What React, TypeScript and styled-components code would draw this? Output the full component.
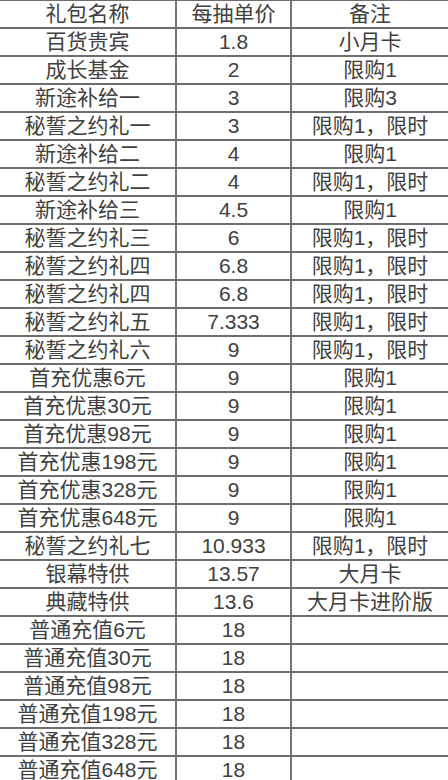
import React from 'react';
import styled, { createGlobalStyle } from 'styled-components';

const GlobalStyle = createGlobalStyle`
    html, body {
        margin: 0;
        padding: 0;
        background: #ffffff;
    }
    body {
        font-family: "Liberation Sans", "Noto Sans CJK SC", sans-serif;
    }
`;

const Sheet = styled.div`
    width: 448px;
    margin-top: -1px;
    border-top: 2px solid #6e6e6e;
    color: #404040;
    font-size: 21px;
`;

const Row = styled.div`
    display: grid;
    grid-template-columns: 175px 115px 158px;
    height: 26px;
    border-bottom: 2px solid #6e6e6e;
`;

const Cell = styled.div<{ $first?: boolean }>`
    display: flex;
    align-items: center;
    justify-content: center;
    white-space: nowrap;
    overflow: hidden;
    line-height: 26px;
    border-left: ${({ $first }) => ($first ? 'none' : '2px solid #747474')};
`;

type Entry = [string, string, string];

const rows: Entry[] = [
    ['礼包名称', '每抽单价', '备注'],
    ['百货贵宾', '1.8', '小月卡'],
    ['成长基金', '2', '限购1'],
    ['新途补给一', '3', '限购3'],
    ['秘誓之约礼一', '3', '限购1，限时'],
    ['新途补给二', '4', '限购1'],
    ['秘誓之约礼二', '4', '限购1，限时'],
    ['新途补给三', '4.5', '限购1'],
    ['秘誓之约礼三', '6', '限购1，限时'],
    ['秘誓之约礼四', '6.8', '限购1，限时'],
    ['秘誓之约礼四', '6.8', '限购1，限时'],
    ['秘誓之约礼五', '7.333', '限购1，限时'],
    ['秘誓之约礼六', '9', '限购1，限时'],
    ['首充优惠6元', '9', '限购1'],
    ['首充优惠30元', '9', '限购1'],
    ['首充优惠98元', '9', '限购1'],
    ['首充优惠198元', '9', '限购1'],
    ['首充优惠328元', '9', '限购1'],
    ['首充优惠648元', '9', '限购1'],
    ['秘誓之约礼七', '10.933', '限购1，限时'],
    ['银幕特供', '13.57', '大月卡'],
    ['典藏特供', '13.6', '大月卡进阶版'],
    ['普通充值6元', '18', ''],
    ['普通充值30元', '18', ''],
    ['普通充值98元', '18', ''],
    ['普通充值198元', '18', ''],
    ['普通充值328元', '18', ''],
    ['普通充值648元', '18', ''],
];

export default function App() {
    return (
        <>
            <GlobalStyle />
            <Sheet>
                {rows.map((r, i) => (
                    <Row key={i}>
                        <Cell $first>{r[0]}</Cell>
                        <Cell>{r[1]}</Cell>
                        <Cell>{r[2]}</Cell>
                    </Row>
                ))}
            </Sheet>
        </>
    );
}
